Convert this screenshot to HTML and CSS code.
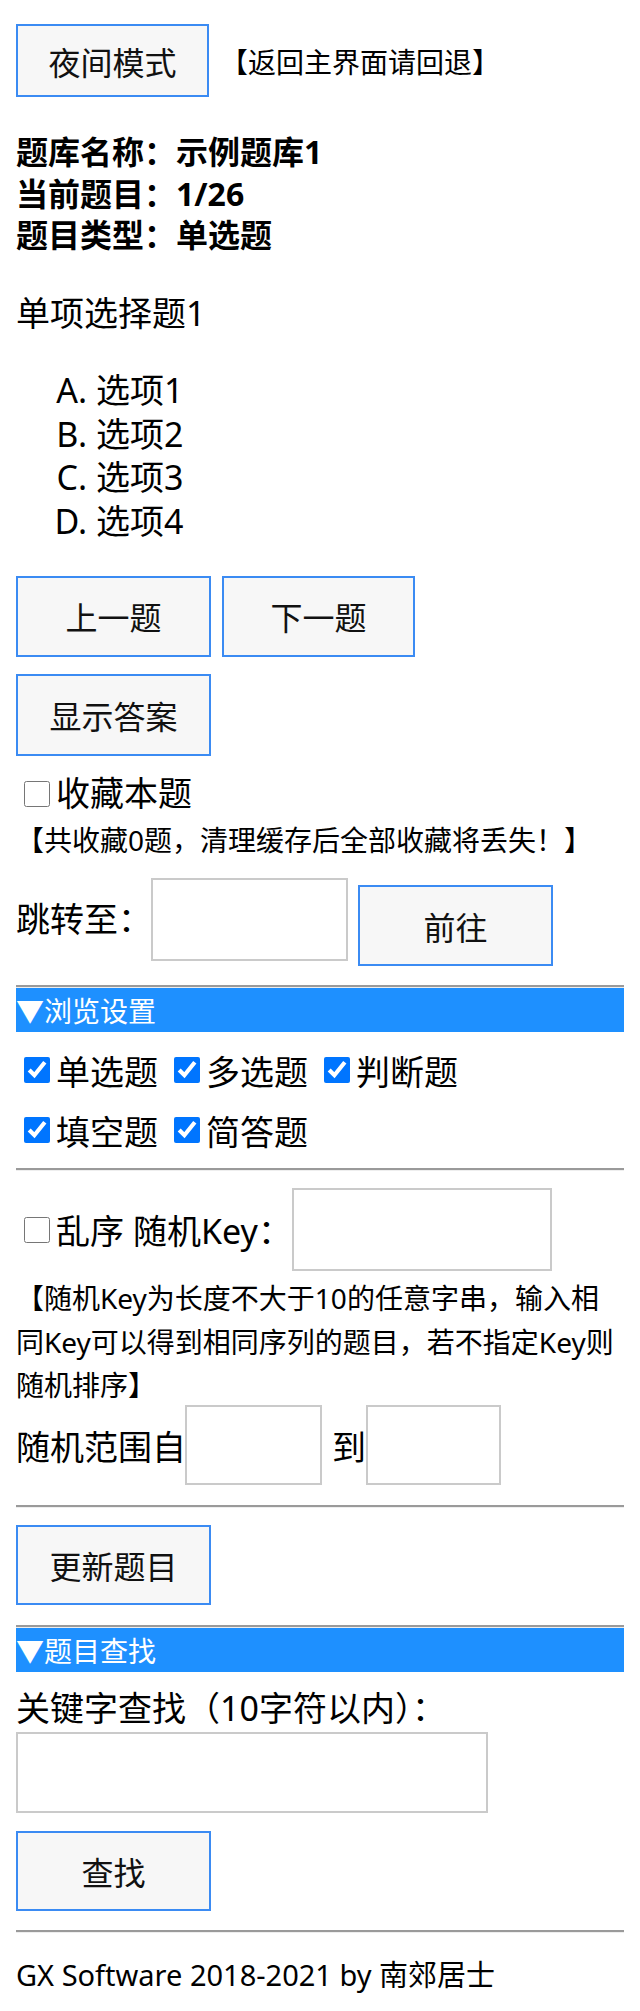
FILE: index.html
```html
<!DOCTYPE html>
<html lang="zh-CN">
<head>
<meta charset="utf-8">
<title>题库练习</title>
<link rel="stylesheet" href="styles.css">
</head>
<body>
<div class="page">
  <div class="top">
    <button class="btn btn-night">夜间模式</button><span class="small top-note">【返回主界面请回退】</span>
  </div>

  <div class="info">
    <div>题库名称：示例题库1</div>
    <div>当前题目：1/26</div>
    <div>题目类型：单选题</div>
  </div>

  <div class="question">单项选择题1</div>

  <ol class="options">
    <li>选项1</li>
    <li>选项2</li>
    <li>选项3</li>
    <li>选项4</li>
  </ol>

  <div class="btn-row nav-row">
    <button class="btn">上一题</button>
    <button class="btn btn-next">下一题</button>
  </div>
  <div class="btn-row answer-row">
    <button class="btn btn-tall">显示答案</button>
  </div>

  <label class="check fav"><input type="checkbox"><span>收藏本题</span></label>
  <div class="small fav-note">【共收藏0题，清理缓存后全部收藏将丢失！】</div>

  <div class="jump">
    <span class="jump-label">跳转至：</span>
    <input class="field jump-field" type="text">
    <button class="btn btn-go">前往</button>
  </div>

  <hr class="hr-jump">
  <div class="bar">▼浏览设置</div>

  <div class="types">
    <div class="type-line">
      <label class="check"><input type="checkbox" checked><span>单选题</span></label>
      <label class="check"><input type="checkbox" checked><span>多选题</span></label>
      <label class="check"><input type="checkbox" checked><span>判断题</span></label>
    </div>
    <div class="type-line">
      <label class="check"><input type="checkbox" checked><span>填空题</span></label>
      <label class="check"><input type="checkbox" checked><span>简答题</span></label>
    </div>
  </div>

  <hr class="hr-types">

  <div class="shuffle">
    <label class="check"><input type="checkbox"><span>乱序</span></label>
    <span class="key-label">随机Key：</span>
    <input class="field key-field" type="text">
  </div>
  <p class="small key-note">【随机Key为长度不大于10的任意字串，输入相同Key可以得到相同序列的题目，若不指定Key则随机排序】</p>

  <div class="range">
    <span>随机范围自</span><input class="field range-field range-from" type="text"><span class="to">到</span><input class="field range-field range-to" type="text">
  </div>

  <hr class="hr-range">
  <div class="btn-row update-row">
    <button class="btn">更新题目</button>
  </div>

  <hr class="hr-update">
  <div class="bar">▼题目查找</div>

  <div class="search-label">关键字查找（10字符以内）：</div>
  <input class="field search-field" type="text">
  <div class="btn-row search-row">
    <button class="btn">查找</button>
  </div>

  <hr class="hr-search">
  <div class="footer">GX Software 2018-2021 by 南郊居士</div>
</div>
</body>
</html>
```

FILE: styles.css
```css
* {
  box-sizing: border-box;
}

html, body {
  margin: 0;
  padding: 0;
  background: #ffffff;
}

body {
  color: #000000;
  font-family: "Noto Sans", "Noto Sans CJK SC", sans-serif;
  font-size: 34px;
}

.page {
  width: 608px;
  margin-left: 16px;
  padding-top: 24px;
}

/* buttons */
.btn {
  display: block;
  width: 195px;
  height: 81px;
  padding: 0;
  margin: 0;
  font-family: inherit;
  font-size: 32px;
  color: #111111;
  background: #f7f7f7;
  border: 2px solid #3b8bf3;
  border-radius: 0;
}

.btn-row {
  display: flex;
}

/* fields */
.field {
  display: block;
  margin: 0;
  padding: 0 6px;
  font-family: inherit;
  font-size: 32px;
  background: #ffffff;
  border: 2px solid #cacaca;
  border-radius: 0;
}

/* checkboxes */
.check {
  display: inline-flex;
  align-items: center;
}

.check input {
  width: 26px;
  height: 26px;
  margin: 0 6px 0 8px;
}

.small {
  font-size: 28px;
}

/* top */
.top {
  display: flex;
  align-items: center;
}

.btn-night {
  width: 193px;
  height: 73px;
}

.top-note {
  margin-left: 11px;
}

/* info */
.info {
  margin-top: 34px;
  font-size: 32px;
  font-weight: 700;
  line-height: 41.5px;
}

.question {
  margin-top: 37px;
  line-height: 41.5px;
}

.options {
  margin: 35px 0 0;
  padding-left: 80px;
  list-style-type: upper-alpha;
  line-height: 43.7px;
}

.nav-row {
  margin-top: 32px;
  gap: 11px;
}

.btn-next {
  width: 193px;
}

.answer-row {
  margin-top: 17px;
}

.btn-tall {
  height: 82px;
}

.fav {
  display: flex;
  margin-top: 17px;
  line-height: 41.5px;
}

.fav-note {
  margin-top: 8px;
  line-height: 36px;
  white-space: nowrap;
}

/* jump */
.jump {
  display: flex;
  align-items: flex-start;
  margin-top: 20px;
  height: 88px;
}

.jump-label {
  line-height: 83px;
}

.jump-field {
  width: 197px;
  height: 83px;
  margin-left: -1px;
}

.btn-go {
  width: 195px;
  margin-top: 7px;
  margin-left: 10px;
}

/* rules */
hr {
  height: 0;
  margin: 0;
  border: 0;
  border-top: 2px solid #9a9a9a;
  border-bottom: 1px solid #eeeeee;
}

.hr-jump {
  margin-top: 19px;
}

.hr-types {
  margin-top: 8px;
}

.hr-range {
  margin-top: 20px;
}

.hr-update {
  margin-top: 20px;
}

.hr-search {
  margin-top: 19px;
}

/* section bar */
.bar {
  height: 44px;
  padding-top: 2px;
  font-size: 28px;
  line-height: 42px;
  color: #ffffff;
  background: #1e90ff;
  white-space: nowrap;
}

/* question types */
.types {
  padding-top: 8px;
}

.type-line {
  display: flex;
  align-items: center;
  height: 60px;
}

.type-line .check {
  margin-right: 8px;
}

/* shuffle */
.shuffle {
  display: flex;
  align-items: center;
  margin-top: 17px;
  height: 83px;
}

.key-label {
  margin-left: 9px;
}

.key-field {
  width: 260px;
  height: 83px;
  margin-left: 0;
}

.key-note {
  margin: 6px 0 0;
  line-height: 43.5px;
}

/* range */
.range {
  display: flex;
  align-items: center;
  margin-top: -2.5px;
  height: 80px;
}

.range-field {
  height: 80px;
}

.range-from {
  width: 137px;
  margin-left: -1px;
}

.to {
  margin-left: 10px;
}

.range-to {
  width: 135px;
  margin-left: 0;
}

.update-row {
  margin-top: 17px;
}

.update-row .btn,
.search-row .btn {
  height: 80px;
}

/* search */
.search-label {
  margin-top: 16px;
  line-height: 41.5px;
}

.search-field {
  width: 472px;
  height: 81px;
  margin-top: 2.5px;
}

.search-row {
  margin-top: 18px;
}

.footer {
  margin-top: 20.5px;
  font-size: 29px;
  line-height: 41.5px;
}
```
